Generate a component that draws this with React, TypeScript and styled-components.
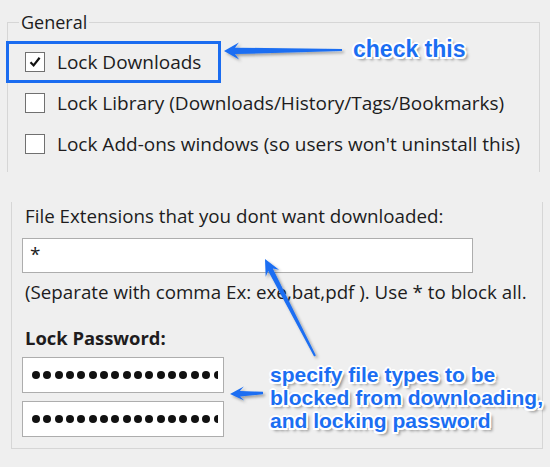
import React from "react";
import styled, { createGlobalStyle } from "styled-components";

const Global = createGlobalStyle`
  html, body { margin: 0; padding: 0; background: #efefef; }
  body { font-family: "Open Sans", "Noto Sans", sans-serif; color: #201c1d; }
`;

const Page = styled.div`
  position: relative;
  width: 550px;
  height: 467px;
  overflow: hidden;
  background: #efefef;
  padding-top: 12px;
  box-sizing: border-box;
`;

const Group = styled.fieldset`
  margin: 0 10px 0 7px;
  padding: 9px 0 8px 11px;
  border: 1px solid #d6d6d6;
  border-bottom: none;
  min-width: 0;
`;

const Legend = styled.legend`
  padding: 0 2px;
  font-size: 18px;
  line-height: 20px;
`;

const Row = styled.div`
  height: 41px;
  display: flex;
  align-items: center;
  gap: 12px;
  padding-left: 6px;
  font-size: 19px;
  white-space: nowrap;
`;

const Box = styled.span`
  width: 20px;
  height: 20px;
  box-sizing: border-box;
  border: 1px solid #707070;
  background: #fff;
  display: flex;
  align-items: center;
  justify-content: center;
  flex: none;
`;

const Panel = styled.div`
  margin: 30px 7px 0 11px;
  height: 247px;
  box-sizing: border-box;
  border: 1px solid #d6d6d6;
  border-top: none;
  padding: 3px 0 0 10px;
  display: flex;
  flex-direction: column;
  align-items: flex-start;
`;

const Label = styled.div<{ $bold?: boolean; $gap?: number }>`
  margin: ${(p) => p.$gap ?? 0}px 0 0 3px;
  font-size: ${(p) => (p.$bold ? 18.4 : 18.75)}px;
  line-height: 22px;
  font-weight: ${(p) => (p.$bold ? 700 : 400)};
  white-space: nowrap;
`;

const TextField = styled.div`
  width: 451px;
  height: 35px;
  margin-top: 11px;
  box-sizing: border-box;
  border: 1px solid #adadad;
  background: #fff;
  font-size: 19px;
  line-height: 22px;
  padding: 4px 0 0 7px;
`;

const MaskField = styled.div`
  width: 202px;
  height: 36px;
  margin-top: 8px;
  box-sizing: border-box;
  border: 1px solid #adadad;
  background: #fff;
  padding: 0 5px 0 9px;
  overflow: hidden;
  display: flex;
  align-items: center;
`;

const DotRow = styled.div`
  display: flex;
  gap: 3.35px;
  overflow: hidden;
  flex: 1;
`;

const Dot = styled.span`
  width: 8px;
  height: 8px;
  border-radius: 50%;
  background: #111;
  flex: none;
`;

const Highlight = styled.div`
  position: absolute;
  left: 6px;
  top: 41px;
  width: 215px;
  height: 42px;
  box-sizing: border-box;
  border: 3px solid #1a6cf0;
`;

const Callout = styled.div<{ $x: number; $y: number; $size: number; $lh: number }>`
  position: absolute;
  left: ${(p) => p.$x}px;
  top: ${(p) => p.$y}px;
  font-family: "Liberation Sans", Arial, sans-serif;
  font-weight: 700;
  font-size: ${(p) => p.$size}px;
  line-height: ${(p) => p.$lh}px;
  color: #1b6ef2;
  white-space: nowrap;
  text-shadow: -1.5px -1.5px 0 #fff, 1.5px -1.5px 0 #fff, -1.5px 1.5px 0 #fff,
    1.5px 1.5px 0 #fff, 0 -2px 0 #fff, 0 2px 0 #fff, -2px 0 0 #fff, 2px 0 0 #fff,
    3px 3px 3px rgba(0, 0, 0, 0.45);
`;

const Arrows = styled.svg`
  position: absolute;
  left: 0;
  top: 0;
  pointer-events: none;
`;

type P = [number, number];

function arrow(tip: P, tail: P, headLen: number, headHalf: number, neckHalf: number, tailHalf: number) {
  const dx = tail[0] - tip[0];
  const dy = tail[1] - tip[1];
  const len = Math.hypot(dx, dy);
  const ux = dx / len;
  const uy = dy / len;
  const nx = -uy;
  const ny = ux;
  const at = (d: number, s: number): string =>
    `${(tip[0] + ux * d + nx * s).toFixed(1)},${(tip[1] + uy * d + ny * s).toFixed(1)}`;
  const neck = headLen - 4;
  return [
    at(0, 0),
    at(headLen, headHalf),
    at(neck, neckHalf),
    at(len, tailHalf),
    at(len, -tailHalf),
    at(neck, -neckHalf),
    at(headLen, -headHalf),
  ].join(" ");
}

function Check() {
  return (
    <svg width="14" height="14" viewBox="0 0 14 14">
      <path d="M2.5 7.2 L5.6 10.4 L11.6 2.8" fill="none" stroke="#111" strokeWidth="2.2" />
    </svg>
  );
}

function CheckRow({ checked, children }: { checked?: boolean; children: React.ReactNode }) {
  return (
    <Row>
      <Box>{checked ? <Check /> : null}</Box>
      <span>{children}</span>
    </Row>
  );
}

function Mask({ count }: { count: number }) {
  return (
    <MaskField>
      <DotRow>
        {Array.from({ length: count }).map((_, i) => (
          <Dot key={i} />
        ))}
      </DotRow>
    </MaskField>
  );
}

export default function App() {
  return (
    <Page>
      <Global />
      <Group>
        <Legend>General</Legend>
        <CheckRow checked>Lock Downloads</CheckRow>
        <CheckRow>Lock Library (Downloads/History/Tags/Bookmarks)</CheckRow>
        <CheckRow>Lock Add-ons windows (so users won't uninstall this)</CheckRow>
      </Group>
      <Panel>
        <Label>File Extensions that you dont want downloaded:</Label>
        <TextField>*</TextField>
        <Label $gap={8}>(Separate with comma Ex: exe,bat,pdf ). Use * to block all.</Label>
        <Label $bold $gap={24}>Lock Password:</Label>
        <Mask count={17} />
        <Mask count={17} />
      </Panel>

      <Highlight />
      <Arrows width="550" height="467" viewBox="0 0 550 467">
        <defs>
          <filter id="sh" x="-20%" y="-20%" width="140%" height="140%">
            <feDropShadow dx="2" dy="2" stdDeviation="1.5" floodColor="#000" floodOpacity="0.35" />
          </filter>
        </defs>
        <g fill="#1b6ef2" filter="url(#sh)">
          <polygon points={arrow([224, 51], [342, 50], 15, 8.5, 3.2, 1)} />
          <polygon points={arrow([265, 259], [315, 356], 16, 7.5, 2.6, 1)} />
          <polygon points={arrow([230, 394], [263, 393], 14, 7, 2.8, 1.2)} />
        </g>
      </Arrows>
      <Callout $x={353} $y={38} $size={23} $lh={23}>check this</Callout>
      <Callout $x={270} $y={363} $size={21} $lh={23}>
        specify file types to be
        <br />
        blocked from downloading,
        <br />
        and locking password
      </Callout>
    </Page>
  );
}
